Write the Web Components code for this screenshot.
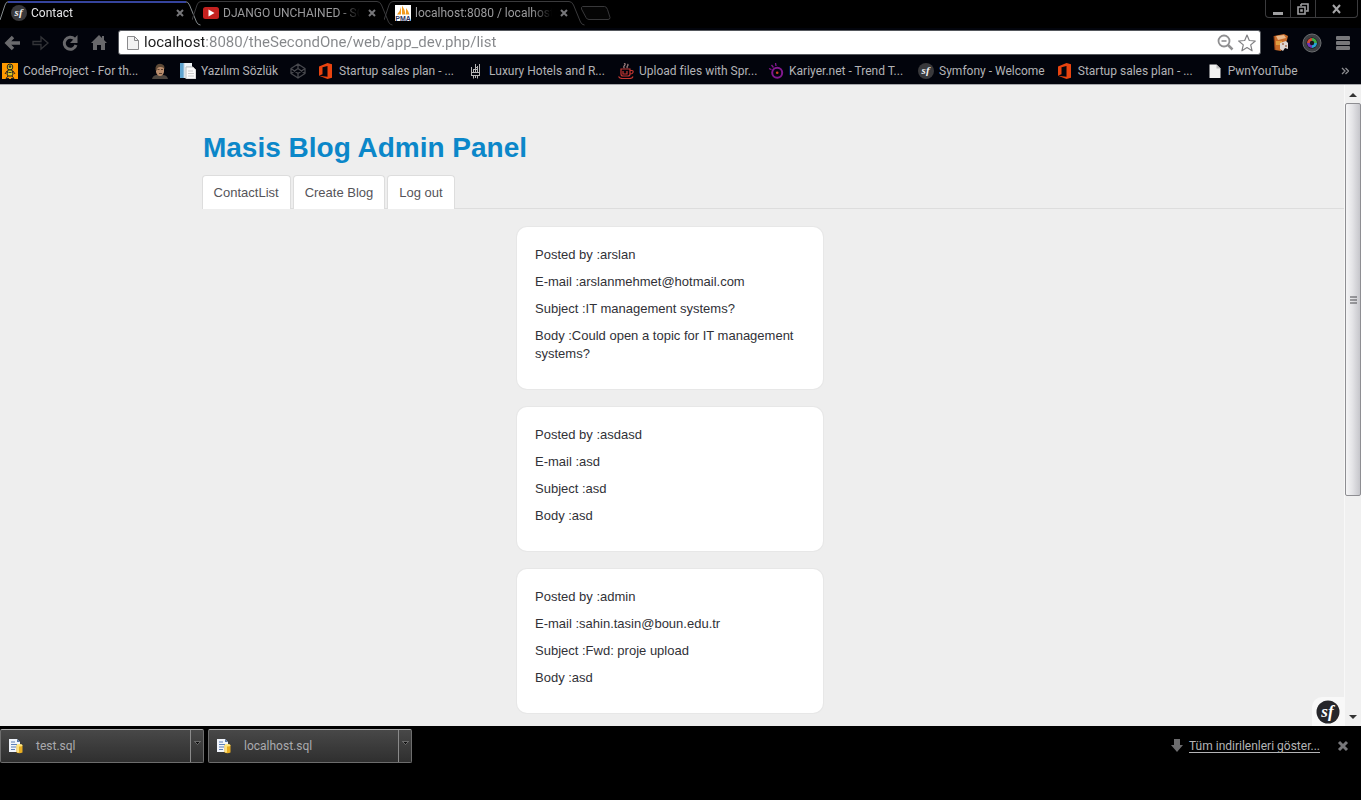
<!DOCTYPE html>
<html lang="tr">
<head>
<meta charset="utf-8">
<title>Contact</title>
<style>
  html, body { margin: 0; background: #000; }
  body { font: 12px/18px Roboto, "Open Sans", sans-serif; color: #b4b4b6; }
</style>
</head>
<body>
<browser-window>
  <tab-strip slot="tabs">
    <browser-tab active label="Contact" icon="sf"></browser-tab>
    <browser-tab label="DJANGO UNCHAINED - SO" icon="youtube"></browser-tab>
    <browser-tab label="localhost:8080 / localhost" icon="pma"></browser-tab>
  </tab-strip>
  <tool-bar slot="toolbar"></tool-bar>
  <bookmark-bar slot="bookmarks">
    <book-mark icon="codeproject" wide>CodeProject - For th...</book-mark>
    <book-mark icon="face" label="Profile"></book-mark>
    <book-mark icon="notes">Yazılım Sözlük</book-mark>
    <book-mark icon="codepen" label="CodePen"></book-mark>
    <book-mark icon="office" wide>Startup sales plan - ...</book-mark>
    <book-mark icon="hotel" wide>Luxury Hotels and R...</book-mark>
    <book-mark icon="cup" wide>Upload files with Spr...</book-mark>
    <book-mark icon="kariyer" wide>Kariyer.net - Trend T...</book-mark>
    <book-mark icon="sf">Symfony - Welcome</book-mark>
    <book-mark icon="office" wide>Startup sales plan - ...</book-mark>
    <book-mark icon="page">PwnYouTube</book-mark>
  </bookmark-bar>
  <page-view slot="page">
    <admin-header>Masis Blog Admin Panel</admin-header>
    <admin-nav></admin-nav>
    <contact-list>
      <contact-card author="arslan" email="arslanmehmet@hotmail.com" subject="IT management systems?" message="Could open a topic for IT management systems?"></contact-card>
      <contact-card author="asdasd" email="asd" subject="asd" message="asd"></contact-card>
      <contact-card author="admin" email="sahin.tasin@boun.edu.tr" subject="Fwd: proje upload" message="asd"></contact-card>
    </contact-list>
  </page-view>
  <download-shelf slot="downloads">
    <download-item>test.sql</download-item>
    <download-item>localhost.sql</download-item>
  </download-shelf>
</browser-window>

<script>
const RESET = `
  :host, *, *::before, *::after { box-sizing: border-box; }
  button { appearance: none; background: none; border: 0; padding: 0; margin: 0; font: inherit; color: inherit; display: flex; align-items: center; justify-content: center; }
  a { color: inherit; text-decoration: none; }
  svg { display: block; flex: none; }
`;

const ICONS = {
  sf: `<svg width="16" height="16" viewBox="0 0 16 16"><circle cx="8" cy="8" r="8" fill="#39393c"/><text x="7.6" y="11.4" text-anchor="middle" font-family="Liberation Serif, serif" font-style="italic" font-weight="bold" font-size="11" fill="#eee">sf</text></svg>`,
  youtube: `<svg width="16" height="16" viewBox="0 0 16 16"><rect y="2" width="16" height="12" rx="2.5" fill="#c4211f"/><path d="M5.5 4.5v7l6-3.5z" fill="#fff"/></svg>`,
  pma: `<svg width="16" height="16" viewBox="0 0 16 16"><rect width="16" height="16" fill="#fff"/><path d="M2 9.5Q5 7 6 2v7.500zM7 9.500V.5q3 4 3.500 9zM11 9.500V3q2.500 3 3.500 6.500z" fill="#f29a1f"/><text x="8" y="15.800" text-anchor="middle" font-family="Liberation Sans, sans-serif" font-weight="bold" font-size="7" fill="#2d3360">PMA</text></svg>`,
  codeproject: `<svg width="16" height="16" viewBox="0 0 16 16"><rect width="16" height="16" fill="#f90"/><ellipse cx="8" cy="4" rx="2.800" ry="3" fill="#d9c520" stroke="#222"/><circle cx="8" cy="3.600" r="1.300" fill="#333"/><path d="M6 7h4l1 4-1 2H6l-1-2z" fill="#d9c520" stroke="#222"/><path d="M5 8L3 11M11 8l2 3M6 13l-2 2.500h3M10 13l2 2.500H9" stroke="#222" fill="none"/><path d="M6.500 9.500h3" stroke="#333"/></svg>`,
  face: `<svg width="16" height="16" viewBox="0 0 16 16"><path d="M0 16q1-4 5-4h6q4 0 5 4z" fill="#4d4640"/><path d="M4 4q4-4 8 0v5q-1 4-4 4T4 9z" fill="#b98c6c"/><path d="M3.500 7Q3 1 8 .8 13 1 12.500 6 11 3.500 8 4 5 4 4.500 8z" fill="#5d4936"/><path d="M5.500 6.500h2M9 6.500h2M7 10.500h3" stroke="#59402f"/></svg>`,
  notes: `<svg width="16" height="16" viewBox="0 0 16 16"><path d="M0 0h12v15H0z" fill="#eef3f6"/><path d="M0 0h4v15H0z" fill="#5fa4cf"/><path d="M4 0v15M6 4h5" stroke="#b9d0df"/><path d="M6 4h7l3 3v9H6z" fill="#fafafa" stroke="#bbb"/><path d="M8 8h5M8 10.500h6M8 13h6" stroke="#ccc"/></svg>`,
  codepen: `<svg width="16" height="16" viewBox="0 0 16 16" fill="none" stroke="#47484d" stroke-width="1.300" stroke-linejoin="round"><path d="M8 1l7 4.500v5L8 15l-7-4.500v-5zM1 5.500l7 5 7-5M1 10.500l7-5 7 5M8 1v4.500M8 10.500V15"/></svg>`,
  office: `<svg width="16" height="16" viewBox="0 0 16 16"><path d="M1 3.500L9.500 0 14 1.300v13.400L9.500 16 1 12.800l8.500 1V3L4.500 4.200v7L1 12.800z" fill="#e8430f"/></svg>`,
  hotel: `<svg width="16" height="16" viewBox="0 0 16 16" fill="none" stroke="#b4b4b4"><path d="M3.500 4v9M5.500 6v3M7.500 1v8M9.500 3v6M11.500 1v12M3 9.500h9M3 12.500h9M5.500 12v3.500M7.500 13v2M9.500 12v3.500M7 4.500h2M5 6.500h4"/></svg>`,
  cup: `<svg width="16" height="16" viewBox="0 0 16 16" fill="none" stroke="#c53732" stroke-width="1.200"><path d="M3 6h9v5q0 2-2 2H5q-2 0-2-2zM12 7.500h2q1.500 0 1 1.800T12 11M.5 13.500q1 2 4 2h7q3 0 3.500-2M5 8v3h4V8"/><path d="M6.500 5Q5 4 6.500 2.500T6 0M9.500 5Q8.500 4 9.500 3t0-2" stroke="#a08080"/></svg>`,
  kariyer: `<svg width="16" height="16" viewBox="0 0 16 16" fill="none"><circle cx="9.200" cy="9.800" r="5" stroke="#83188f" stroke-width="2"/><circle cx="9.200" cy="9.800" r="1.300" fill="#d4451d"/><path d="M7.500 0l.5 3M3.500 2l2 2.500M1 5.500l2.500 1.200" stroke="#83188f" stroke-width="1.300"/></svg>`,
  page: `<svg width="16" height="16" viewBox="0 0 16 16"><path d="M2.500 1.500h7l4 4v9.500h-11z" fill="#f2f2f2"/><path d="M9.500 1.500v4h4z" fill="#bbb"/></svg>`,
  close: `<svg width="8" height="8" viewBox="0 0 8 8"><path d="M1 1l6 6M7 1L1 7" stroke="#77777a" stroke-width="2"/></svg>`,
  sql: `<svg width="16" height="16" viewBox="0 0 16 16"><path d="M1 1h8l3 3v10H1z" fill="#f0f4fb"/><path d="M9 1v3h3z" fill="#5577aa"/><path d="M3 4h4M3 6.500h6M3 9h5M3 11.500h4" stroke="#5d7fb5"/><path d="M8.500 7h6v7.500q-3 1.500-6 0z" fill="#e9ae22"/><path d="M10 8v6.500" stroke="#fff0a0" stroke-width="1.500"/><ellipse cx="11.500" cy="7.200" rx="3" ry="1.200" fill="#ffe680"/></svg>`
};

function define(name, render) {
  customElements.define(name, class extends HTMLElement {
    constructor() {
      super();
      this.attachShadow({ mode: "open" });
    }
    connectedCallback() {
      const t = document.createElement("template");
      t.innerHTML = `<style>${RESET}</style>` + render(this);
      this.shadowRoot.replaceChildren(t.content.cloneNode(true));
    }
  });
}

define("browser-window", () => `
  <style>
    :host { display: flex; flex-direction: column; min-height: 100vh; background: #000; overflow: hidden; }
    main { flex: 1; display: flex; border-top: 1px solid #a5a6aa; }
    ::slotted([slot=page]) { flex: 1; }
  </style>
  <slot name="tabs"></slot>
  <slot name="toolbar"></slot>
  <slot name="bookmarks"></slot>
  <main><slot name="page"></slot></main>
  <slot name="downloads"></slot>`);

define("tab-strip", () => `
  <style>
    :host { display: flex; height: 28px; background: #000; }
    .new { width: 32px; height: 18px; margin: 4px 0 0 4px; }
    .controls { display: flex; height: 18px; margin: 0 3px 0 auto; border: 1px solid #3b3b3d; border-top: 0; border-radius: 0 0 4px 4px; }
    .controls button { width: 25px; height: 17px; border-right: 1px solid #3b3b3d; }
    .controls button:last-child { width: 41px; border: 0; }
  </style>
  <slot></slot>
  <button class="new" aria-label="New tab"><svg width="32" height="18" viewBox="0 0 32 18"><path d="M2.500 2.500h22q2 0 3 3l2.500 8q0 2-2 2H9q-2 0-3-2L1.500 5q-.5-2 1-2.500z" fill="#050505" stroke="#38383a"/></svg></button>
  <div class="controls">
    <button aria-label="Minimize"><svg width="11" height="12"><path d="M0 9h10v3H0z" fill="#a0a0a2"/></svg></button>
    <button aria-label="Restore"><svg width="12" height="12" fill="none" stroke="#a0a0a2" stroke-width="1.600"><path d="M1 4h7v7H1zM4 1h7v7h-2M4 1v2M4 7h1v1H4z"/></svg></button>
    <button aria-label="Close"><svg width="10" height="10"><path d="M1 1l7 8M8 1L1 9" stroke="#a5a5a7" stroke-width="2"/></svg></button>
  </div>`);

define("browser-tab", el => {
  const on = el.hasAttribute("active");
  return `
  <style>
    :host { display: flex; align-items: center; position: relative; width: 192px; height: 28px; padding: 0 8px 2px 11px; color: ${on ? "#e4e4e6" : "#9a9a9c"}; }
    .shape { position: absolute; left: 0; top: 0; }
    .icon, a, button { position: relative; }
    a { flex: 1; margin: 0 8px 0 4px; overflow: hidden; white-space: nowrap; mask-image: linear-gradient(to right, #000 85%, transparent); }
    button { width: 8px; height: 18px; }
  </style>
  <svg class="shape" width="204" height="28" viewBox="0 0 204 28" fill="none">
    <path d="M0 20L5 5q1-3.500 4-3.500h176q3 0 4.500 3.500l7 17q1.500 3 4 3" stroke="${on ? "#858b8e" : "#3a3a3c"}"/>
    ${on ? `<path d="M8 2h178" stroke="#35439c" stroke-width="2"/>` : ""}
  </svg>
  <span class="icon">${ICONS[el.getAttribute("icon")]}</span>
  <a href="#">${el.getAttribute("label")}</a>
  <button aria-label="Close tab">${ICONS.close}</button>`;
});

define("tool-bar", () => `
  <style>
    :host { display: flex; align-items: center; height: 29px; background: #02040c; padding: 0 9px 0 0; }
    nav { display: flex; flex: none; margin-right: 5px; }
    nav button { width: 29px; height: 29px; }
    nav button:first-child { width: 26px; }
    .box { flex: 1; display: flex; align-items: center; height: 25px; background: #fff; border: 1px solid #55585d; border-radius: 3px; padding: 0 2px 0 7px; }
    input { flex: 1; min-width: 0; height: 23px; margin-left: 4px; border: 0; padding: 0; outline: 0; font: 15px/23px Roboto, "Open Sans", sans-serif; color: transparent; background: linear-gradient(to right, #1c1c1c 60px, #85878a 60px); background-clip: text; -webkit-background-clip: text; }
    .box button { width: 22px; height: 22px; }
    .ext { display: flex; align-items: center; margin-left: 11px; gap: 13px; }
    .ext button { width: 18px; height: 20px; }
  </style>
  <nav>
    <button aria-label="Back"><svg width="18" height="18"><path d="M16 9H4M9 3L3 9l6 6" fill="none" stroke="#6a6a6d" stroke-width="3.500"/></svg></button>
    <button aria-label="Forward"><svg width="18" height="18"><path d="M1 7.500h8V3l7 6-7 6v-4.500H1z" fill="none" stroke="#333438" stroke-width="1.300"/></svg></button>
    <button aria-label="Reload"><svg width="18" height="18"><path d="M13.500 5A6 6 0 1 0 15 11" fill="none" stroke="#68686b" stroke-width="3"/><path d="M16.500 1v8H9z" fill="#68686b"/></svg></button>
    <button aria-label="Home"><svg width="18" height="18"><path d="M9 1L1 9h2v7h4v-5h4v5h4V9h2l-3-3V2h-2v2z" fill="#68686b"/></svg></button>
  </nav>
  <div class="box">
    <svg width="14" height="16"><path d="M1.500 1.500h7l4 4v9h-11z" fill="#f3f3f3" stroke="#8a8a8c"/><path d="M8.500 1.500v4h4" fill="none" stroke="#8a8a8c"/></svg>
    <input type="text" aria-label="Address" value="localhost:8080/theSecondOne/web/app_dev.php/list">
    <button aria-label="Zoom"><svg width="17" height="17" fill="none" stroke="#8f8f91"><circle cx="7" cy="7" r="5.500" stroke-width="1.800"/><path d="M4.500 7h5" stroke-width="1.600"/><path d="M11 11l4.500 4.500" stroke-width="2.500"/></svg></button>
    <button aria-label="Bookmark this page"><svg width="18" height="18"><path d="M9 1l2.300 5.500 6 .5-4.600 3.900 1.400 5.900L9 13.600l-5.100 3.200 1.400-5.900L.7 7l6-.5z" fill="#fff" stroke="#808083" stroke-width="1.200" stroke-linejoin="round"/></svg></button>
  </div>
  <div class="ext">
    <button aria-label="Game extension"><svg width="16" height="18"><path d="M1 2l10-2 4 2-1 4-6 11-6-1z" fill="#c96b28"/><path d="M3 2l8-1 2 3-8 2z" fill="#e9b98c"/><path d="M3 7h6v4H3z" fill="#e09d3e"/><path d="M7 9l6-2 2 2v6l-3-1-2 3-3-2z" fill="#dcd5d3"/><path d="M9 10h2M12 12h2M1 2l1 14" stroke="#8a3d17"/></svg></button>
    <button aria-label="Camera extension"><svg width="20" height="20"><circle cx="10" cy="10" r="9" fill="#3e4044" stroke="#6b6d70"/><circle cx="10" cy="10" r="5.500" fill="#111"/><path d="M10 10V5a5 5 0 0 1 5 5z" fill="#3fae48"/><path d="M10 10h5a5 5 0 0 1-5 5z" fill="#27a3d4"/><path d="M10 10v5a5 5 0 0 1-5-5z" fill="#7036b8"/><path d="M10 10H5a5 5 0 0 1 5-5z" fill="#d44a38"/><circle cx="10" cy="10" r="2.200" fill="#15151a"/></svg></button>
    <button aria-label="Menu"><svg width="14" height="16"><g fill="#77777a"><rect y="1" width="14" height="4" rx="1"/><rect y="6" width="14" height="4" rx="1"/><rect y="11" width="14" height="4" rx="1"/></g></svg></button>
  </div>`);

define("bookmark-bar", () => `
  <style>
    :host { display: flex; align-items: center; height: 27px; background: #02040c; padding: 0 12px 0 2px; color: #b2b3b6; }
    button { margin-left: auto; height: 20px; }
  </style>
  <slot></slot>
  <button aria-label="More bookmarks"><svg width="8" height="8" fill="none" stroke="#8b8c90" stroke-width="1.300"><path d="M1 1l3 3-3 3M4.500 1l3 3-3 3"/></svg></button>`);

define("book-mark", el => `
  <style>
    :host { display: block; flex: none; width: ${el.hasAttribute("wide") ? "150px" : "auto"}; }
    a { display: flex; align-items: center; gap: 5px; white-space: nowrap; padding-right: 12px; }
  </style>
  <a href="#" ${el.hasAttribute("label") ? `aria-label="${el.getAttribute("label")}"` : ""}>${ICONS[el.getAttribute("icon")]}${el.hasAttribute("label") ? "" : "<slot></slot>"}</a>`);

define("page-view", () => `
  <style>
    :host { display: flex; position: relative; background: #eee; color: #313137; font: 13px/18px "Liberation Sans", Arial, sans-serif; }
    .content { flex: 1; min-width: 0; padding: 45px 0 12px; }
    .debug { position: absolute; right: 17px; bottom: 0; width: 32px; height: 29px; background: #f8f8f8; border-radius: 10px 0 0 0; }
    .bar { width: 17px; flex: none; display: flex; flex-direction: column; background: #f0f0f0; border-left: 1px solid #f8f8f8; }
    .bar button { height: 18px; flex: none; }
    .track { flex: 1; }
    .thumb { height: 65%; border: 1px solid #8e8e92; border-radius: 2px; background: linear-gradient(to right, #f5f5f6, #e4e4e7 45%, #c6c6cb); display: flex; align-items: center; justify-content: center; }
  </style>
  <div class="content"><slot></slot></div>
  <div class="bar">
    <button aria-label="Scroll up"><svg width="8" height="5"><path d="M0 5l4-4 4 4z" fill="#333"/></svg></button>
    <div class="track"><div class="thumb"><svg width="7" height="8"><path d="M0 1h7M0 4h7M0 7h7" stroke="#4a4a4e"/></svg></div></div>
    <button aria-label="Scroll down"><svg width="8" height="5"><path d="M0 0l4 4 4-4z" fill="#333"/></svg></button>
  </div>
  <button class="debug" aria-label="Symfony toolbar"><svg width="24" height="24" viewBox="0 0 24 24"><circle cx="12" cy="12" r="11.500" fill="#26262a"/><text x="11.500" y="17" text-anchor="middle" font-family="Liberation Serif, serif" font-style="italic" font-weight="bold" font-size="17" fill="#fff">sf</text></svg></button>`);

define("admin-header", () => `
  <style>
    :host { display: block; padding-left: 15.1%; }
    h1 { margin: 0; font-size: 28px; line-height: 36px; color: #0b87c9; }
  </style>
  <h1><slot></slot></h1>`);

define("admin-nav", () => `
  <style>
    :host { display: block; padding: 9px 0 18px 15%; }
    nav { display: flex; gap: 2px; border-bottom: 1px solid #ddd; }
    a { position: relative; height: 34px; margin-bottom: -1px; padding: 8px 11px; border: 1px solid #ddd; border-bottom: 0; border-radius: 4px 4px 0 0; background: #fff; color: #555459; }
  </style>
  <nav><a href="#">ContactList</a><a href="#">Create Blog</a><a href="#">Log out</a></nav>`);

define("contact-list", () => `
  <style>:host { display: flex; flex-direction: column; align-items: center; gap: 18px; padding-right: 4px; }</style>
  <slot></slot>`);

define("contact-card", el => `
  <style>
    :host { display: block; width: 306px; padding: 19px 18px 17px; background: #fff; border-radius: 10px; box-shadow: 0 0 0 1px #e7e7e7; }
    p { margin: 0 0 9px; }
  </style>
  <p>Posted by :${el.getAttribute("author")}</p>
  <p>E-mail :${el.getAttribute("email")}</p>
  <p>Subject :${el.getAttribute("subject")}</p>
  <p>Body :${el.getAttribute("message")}</p>`);

define("download-shelf", () => `
  <style>
    :host { display: flex; align-items: flex-start; gap: 4px; height: 74px; background: #000; padding: 3px 12px 0 0; }
    .all { display: flex; align-items: center; gap: 6px; height: 34px; margin-left: auto; }
    .all a { text-decoration: underline; text-underline-offset: 2px; color: #b4b4b6; }
    .all button { width: 12px; height: 12px; margin-left: 11px; }
  </style>
  <slot></slot>
  <div class="all">
    <svg width="12" height="14"><path d="M3 0h6v6h3l-6 7-6-7h3z" fill="#6c6c6e"/></svg>
    <a href="#">Tüm indirilenleri göster...</a>
    <button aria-label="Close shelf"><svg width="12" height="12"><path d="M2 2l8 8M10 2l-8 8" stroke="#77777a" stroke-width="3"/></svg></button>
  </div>`);

define("download-item", () => `
  <style>
    :host { display: flex; width: 204px; height: 34px; border: 1px solid #6d6d6d; border-top-color: #aaa; border-radius: 2px; background: linear-gradient(#484848, #2f2f2f); color: #aaaaae; }
    .file { flex: 1; justify-content: flex-start; gap: 12px; padding-left: 7px; }
    .more { width: 13px; border-left: 1px solid #8a8a8a; padding-bottom: 6px; }
  </style>
  <button class="file">${ICONS.sql}<slot></slot></button>
  <button class="more" aria-label="Options"><svg width="7" height="5"><path d="M.5.500l3 3 3-3z" fill="#111" stroke="#999" stroke-width=".6"/></svg></button>`);
</script>
</body>
</html>
